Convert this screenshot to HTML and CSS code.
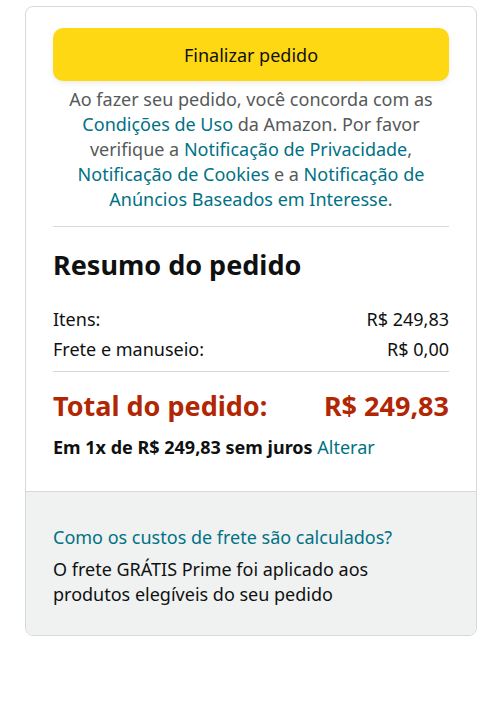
FILE: index.html
```html
<!DOCTYPE html>
<html>
<head>
    <title>Resumo do pedido</title>
    <link rel="stylesheet" href="styles.css">
</head>
<body>
    <div class="card">
        <div class="card-main">
            <button class="place-order">Finalizar pedido</button>
            <p class="terms">
                Ao fazer seu pedido, você concorda com as
                <a href="#">Condições de Uso</a> da Amazon. Por favor
                verifique a <a href="#">Notificação de Privacidade</a>,
                <a href="#">Notificação de Cookies</a> e a <a href="#">Notificação de
                Anúncios Baseados em Interesse</a>.
            </p>

            <hr class="divider">

            <h2 class="summary-title">Resumo do pedido</h2>
            <div class="summary-row">
                <span>Itens:</span>
                <span>R$ 249,83</span>
            </div>
            <div class="summary-row">
                <span>Frete e manuseio:</span>
                <span>R$ 0,00</span>
            </div>

            <hr class="divider divider-total">

            <div class="total-row">
                <span>Total do pedido:</span>
                <span>R$ 249,83</span>
            </div>
            <p class="installments">Em 1x de R$ 249,83 sem juros <a href="#">Alterar</a></p>
        </div>

        <div class="card-footer">
            <a href="#" class="shipping-link">Como os custos de frete são calculados?</a>
            <p class="shipping-note">O frete GRÁTIS Prime foi aplicado aos produtos elegíveis do seu pedido</p>
        </div>
    </div>
</body>
</html>
```

FILE: styles.css
```css
body {
    margin: 0;
    padding: 6px 23px 0 25px;
    font-family: "Noto Sans", "Open Sans", sans-serif;
    color: #0f1111;
    background: #fff;
}

a {
    color: #007185;
    text-decoration: none;
}

.card {
    border: 1px solid #d5d9d9;
    border-radius: 8px;
    overflow: hidden;
}

.card-main {
    padding: 21px 27px 32px;
}

.place-order {
    display: block;
    width: 100%;
    height: 53px;
    border: none;
    border-radius: 10px;
    background: #ffd814;
    box-shadow: 0 2px 5px rgba(213, 217, 217, 0.5);
    font-family: inherit;
    font-size: 18px;
    color: #0f1111;
}

.terms {
    margin: 6px 0 0;
    font-size: 18px;
    line-height: 25px;
    text-align: center;
    color: #565959;
}

.divider {
    margin: 14px 0 0;
    border: none;
    border-top: 1px solid #d5d9d9;
}

.summary-title {
    margin: 22px 0 26px;
    font-size: 27px;
    line-height: 32px;
    font-weight: 700;
}

.summary-row {
    display: flex;
    justify-content: space-between;
    font-size: 18px;
    line-height: 25px;
    margin-bottom: 5px;
}

.divider-total {
    margin-top: 9px;
}

.total-row {
    display: flex;
    justify-content: space-between;
    margin-top: 17px;
    font-size: 27px;
    line-height: 34px;
    font-weight: 700;
    color: #b12704;
}

.installments {
    margin: 12px 0 0;
    font-size: 18px;
    line-height: 24px;
    font-weight: 700;
}

.installments a {
    font-weight: 400;
}

.card-footer {
    background: #f0f2f2;
    border-top: 1px solid #d5d9d9;
    padding: 33px 27px 28px;
    font-size: 18px;
    line-height: 25px;
}

.shipping-link {
    display: block;
    margin-bottom: 7px;
}

.shipping-note {
    margin: 0;
    color: #0f1111;
}
```
